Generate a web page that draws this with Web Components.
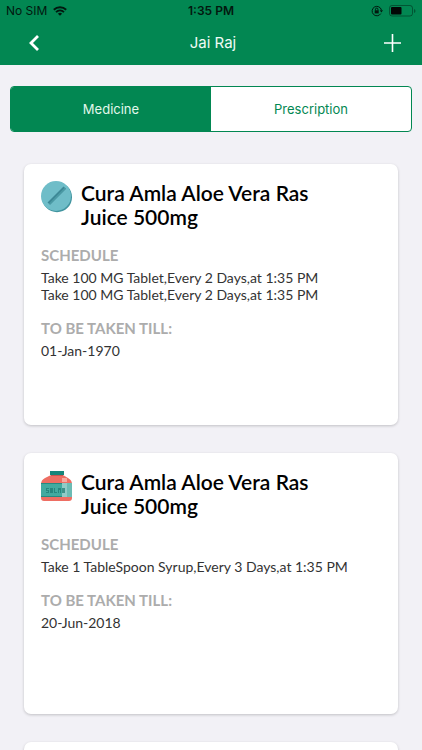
<!DOCTYPE html>
<html lang="en">
<head>
<meta charset="utf-8">
<meta name="viewport" content="width=device-width, initial-scale=1">
<title>Jai Raj</title>
<style>
  :root { --green: #028752; --page: #f2f1f6; }
  body { margin: 0; background: var(--page); font-family: Inter, "Liberation Sans", sans-serif; }
</style>
</head>
<body>
<med-app>
  <status-bar slot="top"></status-bar>
  <nav-bar slot="top">Jai Raj</nav-bar>
  <segment-tabs></segment-tabs>
  <med-list>
    <med-card>
      <pill-icon slot="icon"></pill-icon>
      <span slot="name">Cura Amla Aloe Vera Ras Juice 500mg</span>
      <med-field label="SCHEDULE"><div>Take 100 MG Tablet,Every 2 Days,at 1:35 PM</div><div>Take 100 MG Tablet,Every 2 Days,at 1:35 PM</div></med-field>
      <med-field label="TO BE TAKEN TILL:">01-Jan-1970</med-field>
    </med-card>
    <med-card>
      <syrup-icon slot="icon"></syrup-icon>
      <span slot="name">Cura Amla Aloe Vera Ras Juice 500mg</span>
      <med-field label="SCHEDULE">Take 1 TableSpoon Syrup,Every 3 Days,at 1:35 PM</med-field>
      <med-field label="TO BE TAKEN TILL:">20-Jun-2018</med-field>
    </med-card>
    <med-card></med-card>
  </med-list>
</med-app>

<script>
const define = (name, html, setup) => {
  const template = document.createElement('template');
  template.innerHTML = html;
  customElements.define(name, class extends HTMLElement {
    constructor() {
      super();
      this.attachShadow({ mode: 'open' }).append(template.content.cloneNode(true));
    }
    connectedCallback() { if (setup) setup(this, this.shadowRoot); }
  });
};

define('med-app', `
  <style>
    :host { display: flex; flex-direction: column; height: 100vh; }
    header { background: var(--green); flex: none; }
    main { flex: 1; min-height: 0; overflow-y: auto; scrollbar-width: none; padding: 21px 10px 0; }
  </style>
  <header><slot name="top"></slot></header>
  <main><slot></slot></main>`);

define('status-bar', `
  <style>
    :host { display: grid; grid-template-columns: 1fr auto 1fr; align-items: center; height: 21px; padding: 0 6px; font-size: 12px; color: #02180f; }
    .side { display: flex; align-items: center; gap: 6px; }
    .end { justify-content: flex-end; }
    strong { font-weight: 600; }
    svg { display: block; }
  </style>
  <div class="side"><span>No SIM</span>
    <svg width="14" height="10" viewBox="0 0 14 10" fill="none" stroke="#02180f" stroke-width="1.9"><path d="M.8 3.8a9 9 0 0 1 12.4 0M3 6.1a6 6 0 0 1 8 0"/><path d="M7 9.8 4.9 7.7a3 3 0 0 1 4.2 0z" fill="#02180f" stroke="none"/></svg>
  </div>
  <strong>1:35 PM</strong>
  <div class="side end">
    <svg width="12" height="12" viewBox="0 0 12 12" fill="none" stroke="#02180f"><path d="M9.8 8.6A4.7 4.7 0 1 1 10.4 5"/><path d="M8.8 5.2h3.2L10.4 7.4z" fill="#02180f" stroke="none"/><path d="M3.7 5.3h4v3.1h-4z" fill="#02180f" stroke="none"/><path d="M4.5 5.5V4.3a1.2 1.2 0 0 1 2.4 0v1.2"/></svg>
    <svg width="27" height="12" viewBox="0 0 27 12"><rect x=".5" y=".5" width="23" height="10.5" rx="2.5" fill="none" stroke="#02180f" stroke-opacity=".45"/><rect x="2" y="2" width="10.5" height="7.5" rx="1" fill="#020805"/><path d="M25 4v4q1.5-.5 1.5-2T25 4z" fill="#02180f" fill-opacity=".45"/></svg>
  </div>`);

define('nav-bar', `
  <style>
    :host { display: grid; grid-template-columns: 1fr auto 1fr; align-items: center; height: 44px; padding: 0 18px 0 22px; color: #f0fbf5; }
    h1 { margin: 0; font-size: 15px; font-weight: 400; line-height: 20px; }
    button { appearance: none; border: 0; background: none; padding: 0; width: 24px; height: 24px; display: grid; place-items: center; color: #fff; }
    .add { justify-self: end; }
    svg { display: block; fill: none; stroke: currentColor; }
  </style>
  <button aria-label="Back"><svg width="24" height="24" viewBox="0 0 24 24" stroke-width="2.8"><path d="M16 5 9 12l7 7"/></svg></button>
  <h1><slot></slot></h1>
  <button class="add" aria-label="Add"><svg width="24" height="24" viewBox="0 0 24 24" stroke-width="1.6"><path d="M12.5 3v18M4 12h17"/></svg></button>`);

define('segment-tabs', `
  <style>
    :host { display: block; border: 1px solid var(--green); border-radius: 4px; overflow: hidden; background: #fff; }
    div { display: grid; grid-template-columns: 1fr 1fr; height: 44px; }
    button { appearance: none; border: 0; margin: 0; padding: 0; background: none; color: var(--green); font: 400 13px/16px Inter, "Liberation Sans", sans-serif; }
    button[aria-selected="true"] { background: var(--green); color: #e3f8ec; }
  </style>
  <div role="tablist">
    <button role="tab" aria-selected="true">Medicine</button>
    <button role="tab" aria-selected="false">Prescription</button>
  </div>`, (host, root) => {
    const tabs = [...root.querySelectorAll('button')];
    tabs.forEach(tab => tab.onclick = () => tabs.forEach(t => t.setAttribute('aria-selected', t === tab)));
  });

define('med-list', `
  <style>:host { display: flex; flex-direction: column; gap: 28px; padding: 32px 14px 28px; }</style>
  <slot></slot>`);

define('med-card', `
  <style>
    :host { display: block; box-sizing: border-box; min-height: 261px; padding: 17px; background: #fff; border-radius: 7px; box-shadow: 0 1px 3px rgba(0, 0, 0, .2); font-family: Lato, "Liberation Sans", sans-serif; color: #333; }
    .head { display: grid; grid-template-columns: 32px 1fr; gap: 8px; margin-bottom: 17px; }
    h2 { margin: 0; padding-right: 40px; font-size: 21px; line-height: 24px; font-weight: 600; color: #000; }
  </style>
  <div class="head"><slot name="icon"></slot><h2><slot name="name"></slot></h2></div>
  <slot></slot>`);

define('med-field', `
  <style>
    :host { display: block; margin-bottom: 16px; font-size: 14px; line-height: 17px; }
    h3 { margin: 0 0 5px; font-size: 15px; line-height: 18px; font-weight: 700; color: #acacac; }
  </style>
  <h3></h3><slot></slot>`, (host, root) => { root.querySelector('h3').textContent = host.getAttribute('label'); });

define('pill-icon', `
  <style>:host, svg { display: block; }</style>
  <svg width="32" height="32" viewBox="0 0 32 32"><circle cx="16" cy="16.2" r="15" fill="#41949f"/><circle cx="15" cy="15" r="15" fill="#6fbdc8"/><path d="m6.5 21.5 16-16 2.5 2.3-16 16z" fill="#3c8795"/><path d="m8.2 22.2 15.4-15.4L25 7.8l-16 16z" fill="#4b9aa5"/></svg>`);

define('syrup-icon', `
  <style>:host, svg { display: block; }</style>
  <svg width="32" height="32" viewBox="0 0 32 32"><path d="M10 5h12l5 3q4 2 4 6v14q0 3-3 3H3q-3 0-3-3V14q0-4 4-6z" fill="#ee6e63"/><path d="M9 1h14v4H9z" fill="#17857a"/><path d="M10 5h12v1H10z" fill="#c9554e"/><path d="M0 13h31v14H0z" fill="#43aaa0"/><path d="M0 13h31v1H0zM0 26h31v1H0z" fill="#258b83"/><path d="M21 8h5v4h-5z" fill="#f8aaa0"/><path d="M21 13h5v14h-5z" fill="#91cbc7"/><path d="M26 13h5v14h-5z" fill="#6cbbb4"/><path d="M5 18h3v1H6v1h2v3H5v-1h2v-1H5zm4 0h3v5H9zm4 0h1v4h2v1h-3zm4 0h3v5h-1v-3h-1v3h-1zm4 0h3v5h-3z" fill="#1b7771" fill-opacity=".7"/></svg>`);
</script>
</body>
</html>
